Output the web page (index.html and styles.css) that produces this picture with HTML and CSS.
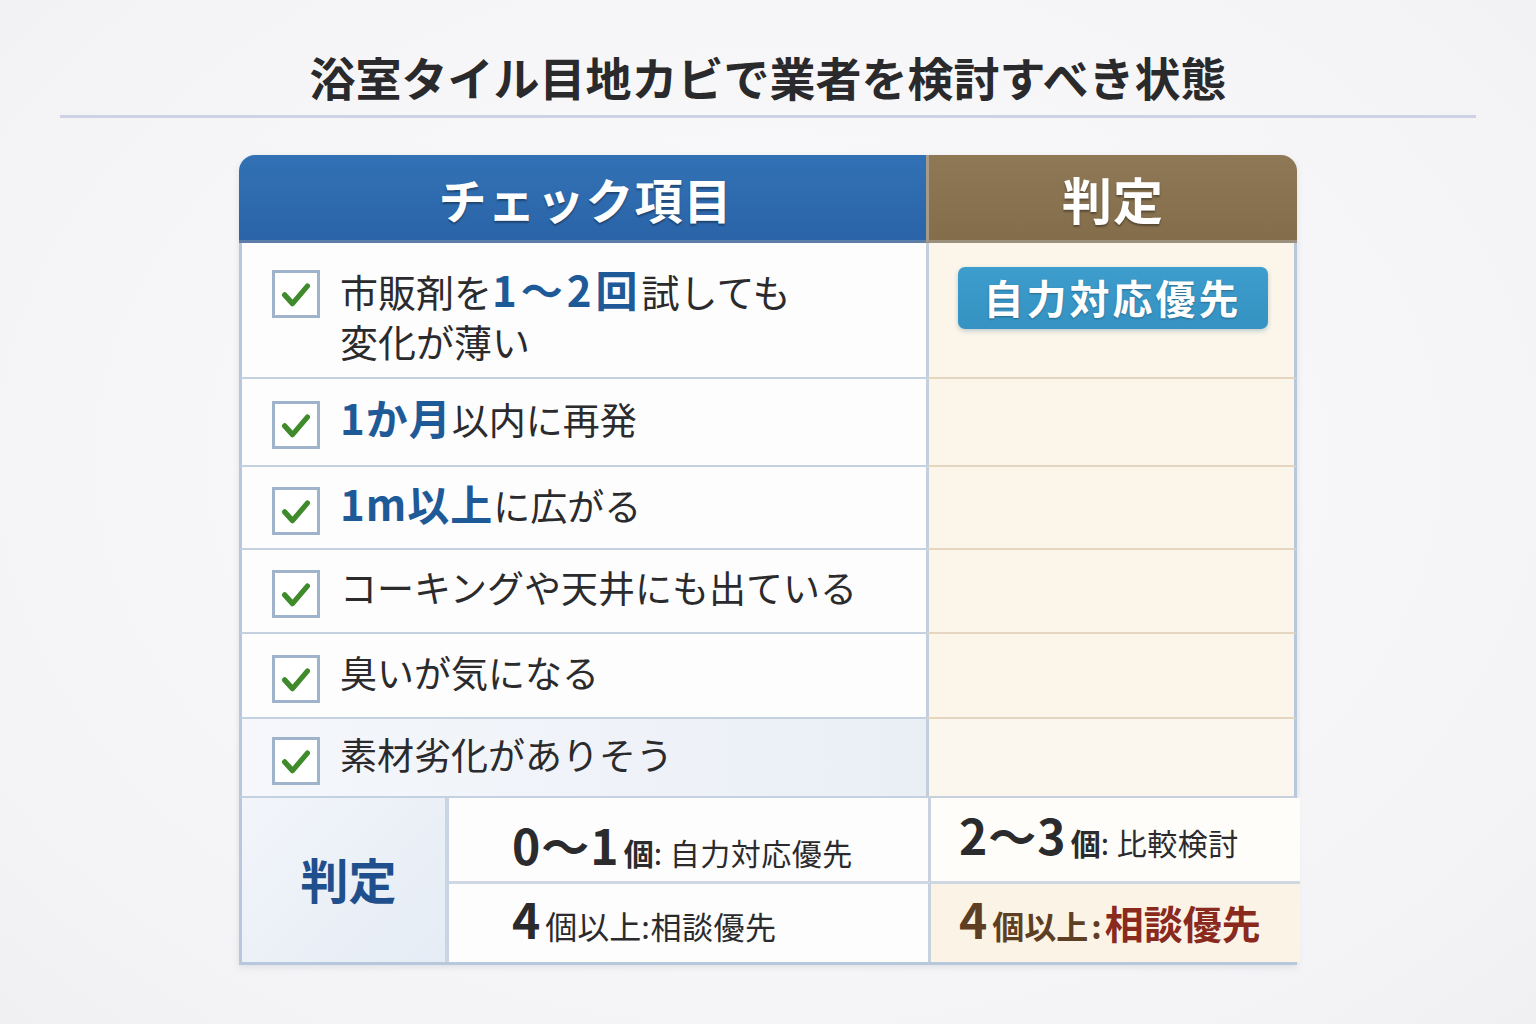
FILE: index.html
```html
<!DOCTYPE html>
<html lang="ja">
<head>
<meta charset="utf-8">
<link rel="stylesheet" href="styles.css">
</head>
<body>
<div class="page">
  <h1 class="title">浴室タイル目地カビで業者を検討すべき状態</h1>
  <div class="rule"></div>
  <div class="table">
    <div class="th th-left">チェック項目</div>
    <div class="th th-right">判定</div>

    <div class="cell item tall">
      <span class="box"><svg viewBox="0 0 48 48"><path d="M11 25 L20 35 L37 15" fill="none" stroke="#3f8a2a" stroke-width="6" stroke-linecap="round" stroke-linejoin="round"/></svg></span>
      <span class="txt">市販剤を<b class="num wide">1～2回</b>試しても<br>変化が薄い</span>
    </div>
    <div class="cell judge tall"><span class="badge">自力対応優先</span></div>

    <div class="cell item r2">
      <span class="box"><svg viewBox="0 0 48 48"><path d="M11 25 L20 35 L37 15" fill="none" stroke="#3f8a2a" stroke-width="6" stroke-linecap="round" stroke-linejoin="round"/></svg></span>
      <span class="txt"><b class="num">1か月</b>以内に再発</span>
    </div>
    <div class="cell judge r2"></div>

    <div class="cell item r3">
      <span class="box"><svg viewBox="0 0 48 48"><path d="M11 25 L20 35 L37 15" fill="none" stroke="#3f8a2a" stroke-width="6" stroke-linecap="round" stroke-linejoin="round"/></svg></span>
      <span class="txt"><b class="num">1m以上</b>に広がる</span>
    </div>
    <div class="cell judge r3"></div>

    <div class="cell item r4">
      <span class="box"><svg viewBox="0 0 48 48"><path d="M11 25 L20 35 L37 15" fill="none" stroke="#3f8a2a" stroke-width="6" stroke-linecap="round" stroke-linejoin="round"/></svg></span>
      <span class="txt">コーキングや天井にも出ている</span>
    </div>
    <div class="cell judge r4"></div>

    <div class="cell item r5">
      <span class="box"><svg viewBox="0 0 48 48"><path d="M11 25 L20 35 L37 15" fill="none" stroke="#3f8a2a" stroke-width="6" stroke-linecap="round" stroke-linejoin="round"/></svg></span>
      <span class="txt">臭いが気になる</span>
    </div>
    <div class="cell judge r5"></div>

    <div class="cell item r6 shaded">
      <span class="box"><svg viewBox="0 0 48 48"><path d="M11 25 L20 35 L37 15" fill="none" stroke="#3f8a2a" stroke-width="6" stroke-linecap="round" stroke-linejoin="round"/></svg></span>
      <span class="txt">素材劣化がありそう</span>
    </div>
    <div class="cell judge r6 last"></div>

    <div class="foot">
      <div class="f-label">判定</div>
      <div class="f-cell f-mid f-top"><span class="big">0～1</span><span class="ko">個</span><span class="small">: 自力対応優先</span></div>
      <div class="f-cell f-right f-top"><span class="big">2～3</span><span class="ko">個</span><span class="small">: 比較検討</span></div>
      <div class="f-cell f-mid f-bot"><span class="big">4</span><span class="ko">個以上</span><span class="small">:相談優先</span></div>
      <div class="f-cell f-right f-bot warm"><span class="big brown">4</span><span class="ko brown">個以上</span><span class="colon brown">:</span><span class="strong">相談優先</span></div>
    </div>
  </div>
</div>
</body>
</html>
```

FILE: styles.css
```css
* { box-sizing: border-box; }
html, body { margin: 0; padding: 0; }
body {
  width: 1536px;
  height: 1024px;
  background: radial-gradient(ellipse at 50% 45%, #fbfbfc 0%, #f5f5f7 70%, #f0f0f3 100%);
  font-family: "Noto Sans CJK JP", "Noto Sans", sans-serif;
  color: #2b2b2d;
  overflow: hidden;
}
.page {
  display: flex;
  flex-direction: column;
  align-items: center;
  padding-top: 46px;
}
.title {
  margin: 0;
  font-size: 46px;
  font-weight: 700;
  line-height: 60px;
  letter-spacing: 0px;
  color: #2a2a2c;
}
.rule {
  width: 1416px;
  height: 3px;
  background: #cdd3e4;
  margin-top: 9px;
  margin-bottom: 37px;
}
.table {
  width: 1058px;
  display: grid;
  grid-template-columns: 687px 371px;
  grid-template-rows: 88px 136px 88px 83px 84px 85px 79px auto;
  border-radius: 16px 16px 0 0;
  box-shadow: 0 2px 6px rgba(120,130,150,0.18);
}
.th {
  display: flex;
  align-items: center;
  justify-content: center;
  color: #fff;
  font-weight: 700;
  font-size: 48px;
  letter-spacing: 1px;
  text-shadow: 0 2px 2px rgba(0,0,0,0.35);
}
.th-left {
  background: linear-gradient(#3271b5, #2b64a8);
  border-radius: 16px 0 0 0;
  border-bottom: 3px solid #5c7ea8;
  padding-left: 6px;
}
.th-right {
  background: linear-gradient(#8e7856, #836d4b);
  border-radius: 0 16px 0 0;
  border-left: 3px solid #a79a86;
  border-bottom: 3px solid #9b8f7e;
  font-size: 50px;
}
.cell { display: flex; }
.item {
  background: #fdfdfe;
  border-left: 3px solid #b7c7dc;
  border-bottom: 2px solid #c3d1e1;
  padding-left: 30px;
  align-items: center;
  gap: 20px;
}
.item.tall { align-items: flex-start; padding-top: 25px; }
.item.shaded { background: linear-gradient(90deg, #f5f7fb, #eaeff6); }
.box {
  width: 48px;
  height: 48px;
  flex: none;
  border: 3px solid #9fb4ca;
  background: #fff;
  display: flex;
}
.box svg { width: 42px; height: 42px; }
.item .box { margin-top: 6px; }
.item.tall .box { margin-top: 2px; }
.txt {
  font-size: 37px;
  line-height: 50px;
  color: #2b2b2d;
  margin-top: -8px;
}
.item.tall .txt { margin-top: -4px; font-size: 38px; }
.num { color: #1f5a98; font-weight: 700; font-size: 42px; letter-spacing: 1px; }
.num.wide { letter-spacing: 4px; }
.judge {
  background: #fcf6ea;
  border-left: 3px solid #c4cfdd;
  border-right: 3px solid #b7c7dc;
  border-bottom: 2px solid #e4d6c1;
  justify-content: center;
}
.judge.tall { align-items: flex-start; padding-top: 24px; }
.judge.last { border-bottom: 2px solid #c8d0dc; background: #fbf7ef; }
.badge {
  display: inline-block;
  width: 310px;
  height: 62px;
  line-height: 60px;
  text-align: center;
  background: linear-gradient(#3d9dcc, #3592c2);
  border-radius: 7px;
  color: #fff;
  font-size: 40px;
  font-weight: 700;
  letter-spacing: 3px;
  text-shadow: 0 1px 2px rgba(0,0,0,0.3);
  box-shadow: 0 2px 5px rgba(40,100,140,0.3);
  margin-left: 2px;
}
.foot {
  grid-column: 1 / 3;
  display: grid;
  grid-template-columns: 207px 482px 369px;
  grid-template-rows: 86px 78px;
  border: 3px solid #b7c7dc;
  border-top: none;
}
.f-label {
  grid-row: 1 / 3;
  display: flex;
  align-items: center;
  justify-content: center;
  background: linear-gradient(135deg, #f2f5fa, #e5ecf5);
  border-right: 4px solid #c8d5e5;
  color: #1f4f8c;
  font-size: 48px;
  font-weight: 700;
  padding-bottom: 4px;
  padding-left: 10px;
}
.f-cell {
  display: flex;
  align-items: baseline;
  background: #fdfdfd;
}
.f-mid { padding-left: 63px; border-right: 3px solid #c8d2df; }
.f-right { padding-left: 28px; background: #fefdfa; }
.f-top { border-bottom: 3px solid #cfd7e2; padding-top: 16px; }
.f-bot { padding-top: 4px; }
.f-right.f-top { padding-top: 6px; }
.f-right.f-bot { padding-top: 4px; }
.warm { background: #fbf4e6; }
.big { font-size: 48px; font-weight: 700; color: #2b2b2d; line-height: 60px; letter-spacing: 1px; }
.ko { font-size: 30px; font-weight: 700; color: #2b2b2d; margin-left: 4px; }
.small { font-size: 30px; color: #2b2b2d; letter-spacing: 0.5px; }
.f-bot .ko { font-weight: 400; font-size: 32px; }
.f-bot .small { font-size: 31px; }
.brown { color: #5e3f24; }
.f-right .ko.brown { font-weight: 700; }
.colon { font-size: 32px; font-weight: 700; margin: 0 3px; }
.strong { font-size: 39px; font-weight: 700; color: #8a2a1f; }
```
